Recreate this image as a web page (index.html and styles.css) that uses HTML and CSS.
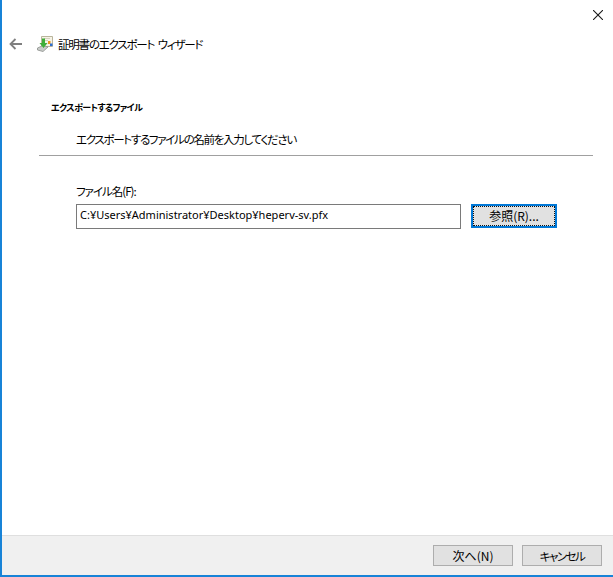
FILE: index.html
```html
<!DOCTYPE html>
<html lang="ja">
<head>
    <meta charset="UTF-8">
    <title>証明書のエクスポート ウィザード</title>
    <link rel="stylesheet" href="styles.css">
</head>
<body>
    <div class="window">
        <div class="close-row">
            <svg class="close-icon" width="10" height="10" viewBox="0 0 10 10">
                <path d="M0 0L10 10M10 0L0 10" stroke="#1a1a1a" stroke-width="1.1" fill="none"/>
            </svg>
        </div>
        <div class="title-row">
            <svg class="back-icon" width="13" height="12" viewBox="0 0 13 12">
                <path d="M13 6H2M6.5 1L1.5 6L6.5 11" stroke="#7f7f7f" stroke-width="1.8" fill="none"/>
            </svg>
            <svg class="wizard-icon" width="17" height="17" viewBox="0 0 17 17">
                <path d="M4.5 1.5H15.5V11.5H4.5Z" fill="#f6f3e6" stroke="#b9b59c" stroke-width="1"/>
                <path d="M7 3.5H13M7 5.5H11" stroke="#d5d1bd" stroke-width="1"/>
                <path d="M0.5 13L6 10.5L11 12L6 16.5L0.5 15Z" fill="#c9ccc9" stroke="#8b8f8b" stroke-width="0.8"/>
                <path d="M5 3.5V8H2.5L6.5 13L10.5 8H8V3.5Z" fill="#3fae3a"/>
                <rect x="11" y="6" width="2.5" height="3" fill="#e8961e"/>
                <rect x="13" y="8.5" width="2.5" height="2.5" fill="#2f6fd0"/>
            </svg>
            <span class="wizard-title">証明書のエクスポート ウィザード</span>
        </div>
        <div class="section-head">
            <div class="section-title">エクスポートするファイル</div>
            <div class="section-desc">エクスポートするファイルの名前を入力してください</div>
        </div>
        <div class="content">
            <label class="file-label" for="filename">ファイル名(F):</label>
            <div class="file-row">
                <input class="file-input" id="filename" type="text" value="C:¥Users¥Administrator¥Desktop¥heperv-sv.pfx">
                <button class="btn btn-focus" type="button"><span class="focus-ring">参照(R)...</span></button>
            </div>
        </div>
        <div class="footer">
            <button class="btn" type="button">次へ(N)</button>
            <button class="btn btn-narrow" type="button">キャンセル</button>
        </div>
    </div>
</body>
</html>
```

FILE: styles.css
```css
html, body {
    margin: 0;
    height: 100%;
    overflow: hidden;
}

body {
    font-family: "Noto Sans CJK JP", "Noto Sans", sans-serif;
    font-size: 12px;
    font-feature-settings: "palt";
    color: #000000;
    background-color: #ffffff;
}

.window {
    box-sizing: border-box;
    height: 577px;
    display: flex;
    flex-direction: column;
    border-left: 2px solid #1883d7;
    border-bottom: 2px solid #1883d7;
}

.close-row {
    height: 27px;
    display: flex;
    justify-content: flex-end;
    align-items: flex-start;
    padding-top: 10px;
    padding-right: 10px;
    box-sizing: border-box;
}

.title-row {
    display: flex;
    align-items: center;
    height: 34px;
    padding-left: 7px;
}

.wizard-icon {
    margin-left: 15px;
    margin-bottom: 2px;
}

.wizard-title {
    margin-left: 4px;
    font-size: 11.5px;
    letter-spacing: -1.2px;
    word-spacing: 2px;
    margin-bottom: 1px;
}

.section-head {
    margin: 40px 20px 0 37px;
    padding: 0 0 7px 0;
    border-bottom: 1px solid #a0a0a0;
}

.section-title {
    font-size: 9px;
    font-weight: bold;
    letter-spacing: -0.6px;
    padding-left: 12px;
    line-height: 14px;
}

.section-desc {
    padding-left: 37px;
    margin-top: 15px;
    font-size: 11.5px;
    letter-spacing: -1.3px;
    line-height: 18px;
}

.content {
    flex: 1;
    padding: 26px 0 0 74px;
}

.file-label {
    display: block;
    font-size: 11.5px;
    letter-spacing: -1px;
    line-height: 18px;
    margin-bottom: 4px;
}

.file-row {
    display: flex;
    align-items: flex-start;
    gap: 10px;
}

.file-input {
    box-sizing: border-box;
    width: 385px;
    height: 25px;
    padding: 0 3px 5px 3px;
    border: 1px solid #7a7a7a;
    font-family: "Noto Sans", "Noto Sans CJK JP", sans-serif;
    font-size: 11px;
    color: #000000;
    outline: none;
}

.btn {
    box-sizing: border-box;
    height: 21px;
    padding: 0;
    width: 80px;
    background-color: #e1e1e1;
    border: 1px solid #adadad;
    font-family: "Noto Sans CJK JP", "Noto Sans", sans-serif;
    font-size: 12px;
    font-feature-settings: "palt";
    color: #000000;
}

.btn-narrow {
    font-size: 11.5px;
    letter-spacing: -1.5px;
}

.btn-focus {
    width: 86px;
    height: 24px;
    border: 2px solid #0078d7;
    padding: 0;
}

.focus-ring {
    display: block;
    height: 100%;
    line-height: 18px;
    box-sizing: border-box;
    border: 1px dotted #111111;
}

.footer {
    height: 40px;
    box-sizing: border-box;
    background-color: #f0f0f0;
    border-top: 1px solid #dfdfdf;
    display: flex;
    justify-content: flex-end;
    align-items: flex-start;
    gap: 9px;
    padding: 9px 11px 0 0;
}
```
